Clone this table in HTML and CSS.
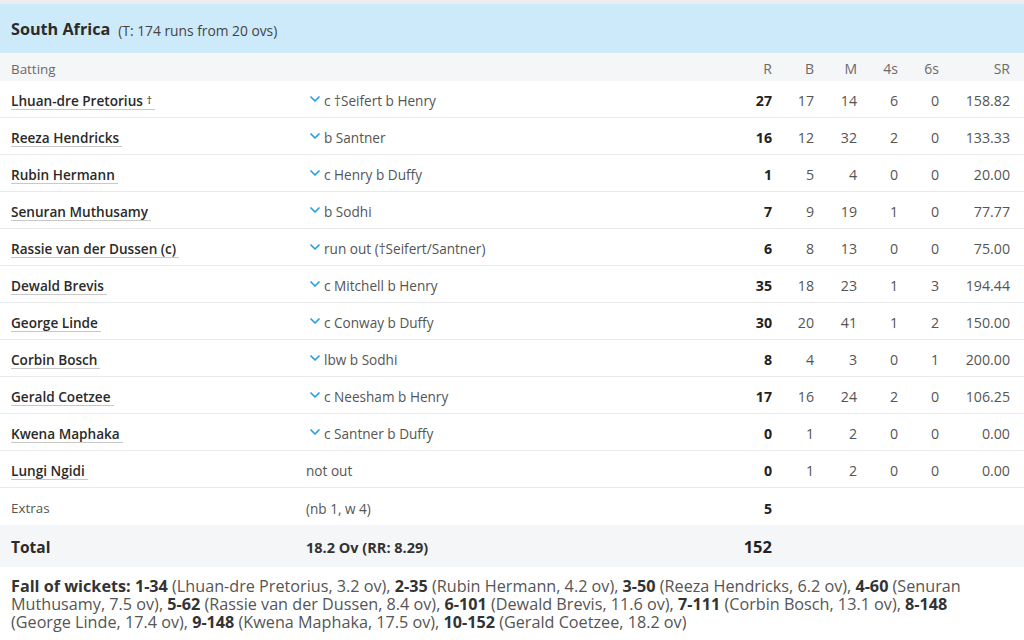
FILE: index.html
```html
<!DOCTYPE html>
<html>
<head>
<meta charset="utf-8">
<link rel="stylesheet" href="styles.css">
</head>
<body>
<div class="card">
  <div class="team-head">
    <span class="team">South Africa</span>
    <span class="target">(T: 174 runs from 20 ovs)</span>
  </div>
  <div class="row head">
    <div class="c-name">Batting</div>
    <div class="c-dis"></div>
    <div class="num">R</div>
    <div class="num">B</div>
    <div class="num">M</div>
    <div class="num">4s</div>
    <div class="num">6s</div>
    <div class="num">SR</div>
  </div>

  <div class="row">
    <div class="c-name"><a class="player">Lhuan-dre Pretorius <span class="dag">†</span></a></div>
    <div class="c-dis"><svg class="chev" viewBox="0 0 10 6"><polyline points="1,1 5,5 9,1"/></svg>c †Seifert b Henry</div>
    <div class="num r">27</div><div class="num">17</div><div class="num">14</div><div class="num">6</div><div class="num">0</div><div class="num">158.82</div>
  </div>
  <div class="row">
    <div class="c-name"><a class="player">Reeza Hendricks</a></div>
    <div class="c-dis"><svg class="chev" viewBox="0 0 10 6"><polyline points="1,1 5,5 9,1"/></svg>b Santner</div>
    <div class="num r">16</div><div class="num">12</div><div class="num">32</div><div class="num">2</div><div class="num">0</div><div class="num">133.33</div>
  </div>
  <div class="row">
    <div class="c-name"><a class="player">Rubin Hermann</a></div>
    <div class="c-dis"><svg class="chev" viewBox="0 0 10 6"><polyline points="1,1 5,5 9,1"/></svg>c Henry b Duffy</div>
    <div class="num r">1</div><div class="num">5</div><div class="num">4</div><div class="num">0</div><div class="num">0</div><div class="num">20.00</div>
  </div>
  <div class="row">
    <div class="c-name"><a class="player">Senuran Muthusamy</a></div>
    <div class="c-dis"><svg class="chev" viewBox="0 0 10 6"><polyline points="1,1 5,5 9,1"/></svg>b Sodhi</div>
    <div class="num r">7</div><div class="num">9</div><div class="num">19</div><div class="num">1</div><div class="num">0</div><div class="num">77.77</div>
  </div>
  <div class="row">
    <div class="c-name"><a class="player">Rassie van der Dussen (c)</a></div>
    <div class="c-dis"><svg class="chev" viewBox="0 0 10 6"><polyline points="1,1 5,5 9,1"/></svg>run out (†Seifert/Santner)</div>
    <div class="num r">6</div><div class="num">8</div><div class="num">13</div><div class="num">0</div><div class="num">0</div><div class="num">75.00</div>
  </div>
  <div class="row">
    <div class="c-name"><a class="player">Dewald Brevis</a></div>
    <div class="c-dis"><svg class="chev" viewBox="0 0 10 6"><polyline points="1,1 5,5 9,1"/></svg>c Mitchell b Henry</div>
    <div class="num r">35</div><div class="num">18</div><div class="num">23</div><div class="num">1</div><div class="num">3</div><div class="num">194.44</div>
  </div>
  <div class="row">
    <div class="c-name"><a class="player">George Linde</a></div>
    <div class="c-dis"><svg class="chev" viewBox="0 0 10 6"><polyline points="1,1 5,5 9,1"/></svg>c Conway b Duffy</div>
    <div class="num r">30</div><div class="num">20</div><div class="num">41</div><div class="num">1</div><div class="num">2</div><div class="num">150.00</div>
  </div>
  <div class="row">
    <div class="c-name"><a class="player">Corbin Bosch</a></div>
    <div class="c-dis"><svg class="chev" viewBox="0 0 10 6"><polyline points="1,1 5,5 9,1"/></svg>lbw b Sodhi</div>
    <div class="num r">8</div><div class="num">4</div><div class="num">3</div><div class="num">0</div><div class="num">1</div><div class="num">200.00</div>
  </div>
  <div class="row">
    <div class="c-name"><a class="player">Gerald Coetzee</a></div>
    <div class="c-dis"><svg class="chev" viewBox="0 0 10 6"><polyline points="1,1 5,5 9,1"/></svg>c Neesham b Henry</div>
    <div class="num r">17</div><div class="num">16</div><div class="num">24</div><div class="num">2</div><div class="num">0</div><div class="num">106.25</div>
  </div>
  <div class="row">
    <div class="c-name"><a class="player">Kwena Maphaka</a></div>
    <div class="c-dis"><svg class="chev" viewBox="0 0 10 6"><polyline points="1,1 5,5 9,1"/></svg>c Santner b Duffy</div>
    <div class="num r">0</div><div class="num">1</div><div class="num">2</div><div class="num">0</div><div class="num">0</div><div class="num">0.00</div>
  </div>
  <div class="row">
    <div class="c-name"><a class="player">Lungi Ngidi</a></div>
    <div class="c-dis plain">not out</div>
    <div class="num r">0</div><div class="num">1</div><div class="num">2</div><div class="num">0</div><div class="num">0</div><div class="num">0.00</div>
  </div>
  <div class="row extras">
    <div class="c-name">Extras</div>
    <div class="c-dis plain">(nb 1, w 4)</div>
    <div class="num r">5</div><div class="num"></div><div class="num"></div><div class="num"></div><div class="num"></div><div class="num"></div>
  </div>
  <div class="row total">
    <div class="c-name">Total</div>
    <div class="c-dis plain">18.2 Ov (RR: 8.29)</div>
    <div class="num r">152</div><div class="num"></div><div class="num"></div><div class="num"></div><div class="num"></div><div class="num"></div>
  </div>
  <div class="fow">
    <b>Fall of wickets:</b> <b>1-34</b> (Lhuan-dre Pretorius, 3.2 ov), <b>2-35</b> (Rubin Hermann, 4.2 ov), <b>3-50</b> (Reeza Hendricks, 6.2 ov), <b>4-60</b> (Senuran Muthusamy, 7.5 ov), <b>5-62</b> (Rassie van der Dussen, 8.4 ov), <b>6-101</b> (Dewald Brevis, 11.6 ov), <b>7-111</b> (Corbin Bosch, 13.1 ov), <b>8-148</b> (George Linde, 17.4 ov), <b>9-148</b> (Kwena Maphaka, 17.5 ov), <b>10-152</b> (Gerald Coetzee, 18.2 ov)
  </div>
</div>
</body>
</html>
```
FILE: styles.css
```css
html, body {
  margin: 0;
  padding: 0;
  background: #ffffff;
}
body {
  font-family: "Open Sans", "Noto Sans", "DejaVu Sans", sans-serif;
  color: #333;
}
.card {
  border-top: 4px solid #eaecee;
  width: 1024px;
}
.team-head {
  background: #cdeafa;
  height: 49px;
  display: flex;
  align-items: center;
  padding: 1px 11px 0 11px;
  box-sizing: border-box;
}
.team {
  font-weight: 700;
  font-size: 16.2px;
  color: #2b2b2b;
}
.target {
  font-size: 13.8px;
  color: #444;
  margin-left: 8px;
  margin-top: 2px;
}
.row {
  display: grid;
  grid-template-columns: 295px 1fr 42px 42px 43px 41px 41px 71px;
  align-items: center;
  padding: 3px 14px 0 11px;
  height: 37px;
  border-bottom: 1px solid #e8e9ea;
  box-sizing: border-box;
  font-size: 14.2px;
  color: #555;
}
.row.head {
  height: 28px;
  background: #f5f6f7;
  border-bottom: none;
  color: #6a6a6a;
  font-size: 14px;
}
.head .c-name {
  font-size: 13.4px;
}
.num {
  text-align: right;
}
.num.r {
  font-weight: 700;
  color: #222;
}
.player {
  display: inline-block;
  font-weight: 600;
  font-size: 13.6px;
  color: #2a2a2a;
  border-bottom: 1px solid #c8c8c8;
  padding-right: 3px;
  line-height: 17px;
}
.dag {
  font-weight: 400;
  font-size: 11px;
  vertical-align: 2px;
}
.c-dis {
  display: flex;
  align-items: center;
  color: #555;
  font-size: 13.6px;
  margin-left: -1px;
}
.c-dis.plain {
  margin-left: 0;
}
.chev {
  width: 10px;
  height: 6px;
  margin: 0 4px 3px 5px;
  fill: none;
  stroke: #2a9de0;
  stroke-width: 1.7;
  stroke-linecap: round;
  stroke-linejoin: round;
}
.extras {
  height: 37px;
  border-bottom: none;
}
.extras .c-name {
  color: #555;
  font-size: 13.4px;
}
.total {
  height: 42px;
  background: #f5f6f7;
  border-bottom: none;
  padding-top: 1px;
}
.total .c-name {
  font-weight: 700;
  font-size: 15.5px;
  color: #2b2b2b;
}
.total .c-dis {
  font-weight: 700;
  font-size: 14.5px;
  color: #333;
  margin-top: 2px;
}
.total .num.r {
  font-size: 16.5px;
}
.fow {
  padding: 10px 45px 10px 11px;
  font-size: 16.2px;
  line-height: 18px;
  color: #555;
}
.fow b {
  color: #333;
  font-weight: 700;
}
```
